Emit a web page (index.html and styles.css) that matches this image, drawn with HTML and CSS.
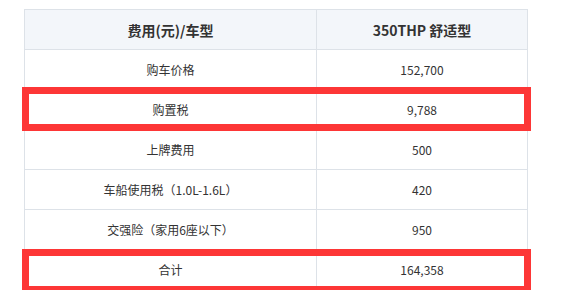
FILE: index.html
```html
<!DOCTYPE html>
<html lang="zh-CN">
<head>
<meta charset="utf-8">
<title>费用</title>
<link rel="stylesheet" href="styles.css">
</head>
<body>
<div class="wrap">
  <div class="sheet">
    <div class="cell head">费用(元)/车型</div>
    <div class="cell head">350THP 舒适型</div>
    <div class="cell">购车价格</div>
    <div class="cell">152,700</div>
    <div class="cell">购置税</div>
    <div class="cell">9,788</div>
    <div class="cell">上牌费用</div>
    <div class="cell">500</div>
    <div class="cell">车船使用税（1.0L-1.6L）</div>
    <div class="cell">420</div>
    <div class="cell">交强险（家用6座以下）</div>
    <div class="cell">950</div>
    <div class="cell">合计</div>
    <div class="cell">164,358</div>
    <div class="mark mark-tax"></div>
    <div class="mark mark-total"></div>
  </div>
</div>
</body>
</html>
```
FILE: styles.css
```css
html, body {
  margin: 0;
  padding: 0;
  background: #ffffff;
}
body {
  font-family: "Noto Sans CJK SC", "Noto Sans", sans-serif;
  color: #333333;
}
.wrap {
  padding: 9px 0 0 24px;
}
.sheet {
  position: relative;
  width: 504px;
  box-sizing: border-box;
  display: grid;
  grid-template-columns: 292px 211px;
  grid-auto-rows: 40px;
  border-top: 1px solid #dde2e8;
  border-left: 1px solid #dde2e8;
}
.cell {
  display: flex;
  align-items: center;
  justify-content: center;
  border-right: 1px solid #dde2e8;
  border-bottom: 1px solid #dde2e8;
  font-size: 12px;
  line-height: 1;
}
.head {
  background: #f3f6fa;
  font-size: 14px;
  font-weight: bold;
}
.mark {
  position: absolute;
  left: -3px;
  width: 509px;
  height: 44px;
  box-sizing: border-box;
  border: 7px solid #fd3636;
}
.mark-tax {
  top: 77px;
}
.mark-total {
  top: 239px;
}
```
